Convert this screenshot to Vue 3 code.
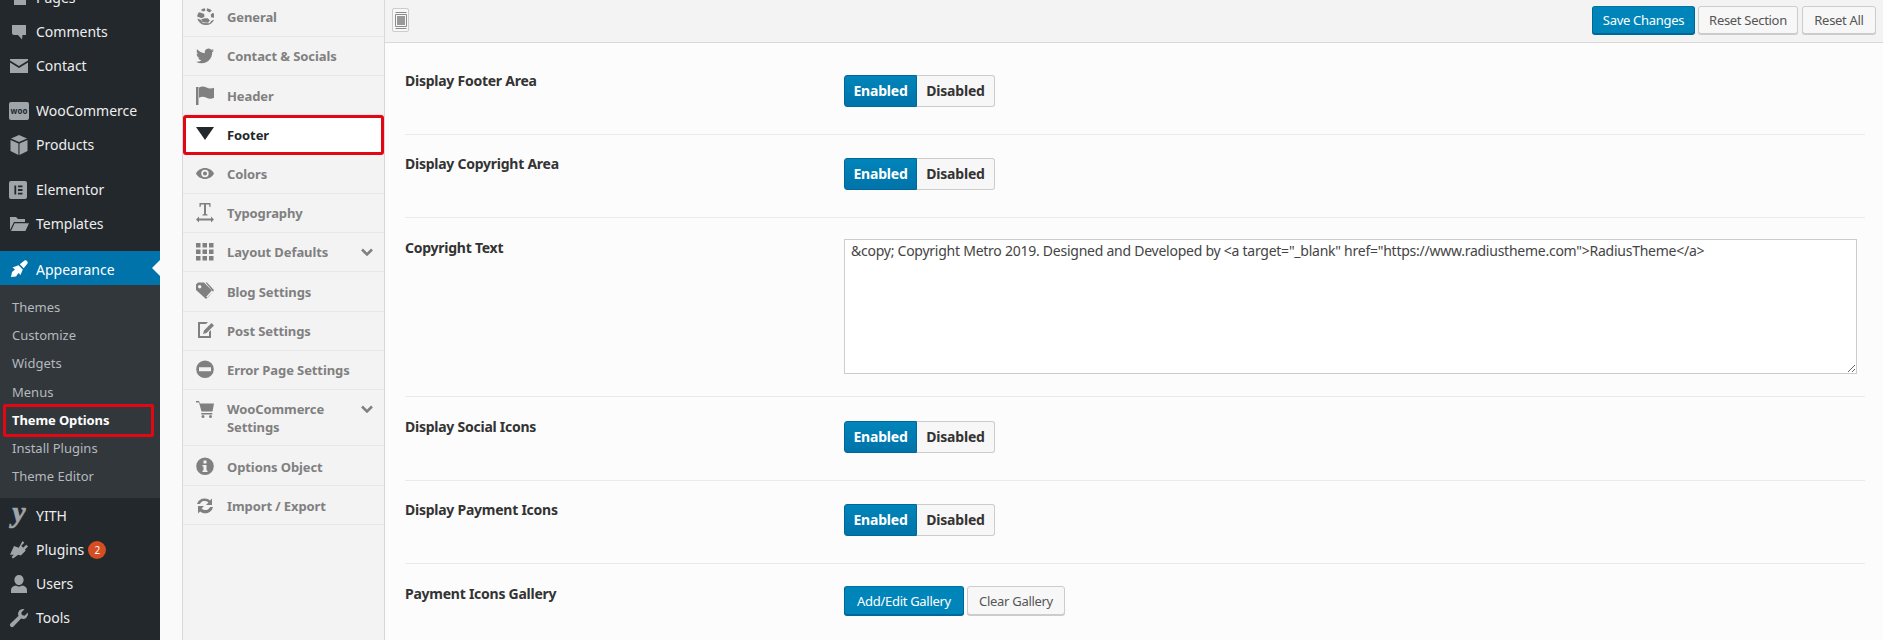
<script setup>
const menuA = [
  { label: 'Pages', icon: 'pages' },
  { label: 'Comments', icon: 'comments' },
  { label: 'Contact', icon: 'mail', sep: true },
  { label: 'WooCommerce', icon: 'woo' },
  { label: 'Products', icon: 'box', sep: true },
  { label: 'Elementor', icon: 'elementor' },
  { label: 'Templates', icon: 'folder', sep: true },
]
const submenu = ['Themes', 'Customize', 'Widgets', 'Menus', 'Theme Options', 'Install Plugins', 'Theme Editor']
const menuB = [
  { label: 'YITH', icon: 'yith' },
  { label: 'Plugins', icon: 'plug', badge: '2' },
  { label: 'Users', icon: 'user' },
  { label: 'Tools', icon: 'wrench' },
]
const icons = {
  pages: 'M3 1h12l2 2v14H5V5H3z',
  comments: 'M3 3h14v10h-3.500l-.5 4.500L9 13H5a2 2 0 0 1-2-2z',
  mail: 'M1 3h18v1.5L10 10 1 4.5zM1 6.5l9 5.5 9-5.5V17H1z',
  box: 'M10 0l8 3.5-8 3.6-8-3.6zM1.5 5L9.4 8.6V20L1.5 16zM18.5 5v11l-8 4V8.6z',
  folder: 'M1 3h6l2 2h7v3H5L1 16zM5.6 9.3H20L16.4 17H2z',
  plug: 'M13.5 1l1.8 1.8-3 3 1.9 1.9 3-3L19 6.5l-3 3 .6 1.2-4.8 4.8-2.6-.8L4 18.5l-1.4-1.4 2.3-2.4H1l4-8.6 4.8 1.6z',
  user: 'M10 1a4.6 4.6 0 0 1 4.6 5c0 2.2-1.6 5-4.6 5S5.4 8.200 5.400 6A4.600 4.600 0 0 1 10 1zM7 11.500c1.800 1.300 4.200 1.300 6 0 3 .4 5 2 5 4.500v3H2v-3c0-2.500 2-4.100 5-4.500z',
  wrench: 'M18.800 4.500a5 5 0 0 1-6.700 6.100L4.500 18.500a1.900 1.900 0 0 1-3-2.900l7.900-7.700A5 5 0 0 1 15.500 1.200L12.300 4.400l.6 2.700 2.700.6z',
}
const nav = [
  { label: 'General', icon: 'globe' },
  { label: 'Contact & Socials', icon: 'twitter' },
  { label: 'Header', icon: 'flag' },
  { label: 'Footer', icon: 'down', active: true },
  { label: 'Colors', icon: 'eye' },
  { label: 'Typography', icon: 'type' },
  { label: 'Layout Defaults', icon: 'grid', caret: true },
  { label: 'Blog Settings', icon: 'tags' },
  { label: 'Post Settings', icon: 'edit' },
  { label: 'Error Page Settings', icon: 'minus' },
  { label: 'WooCommerce Settings', icon: 'cart', caret: true, tall: true },
  { label: 'Options Object', icon: 'info' },
  { label: 'Import / Export', icon: 'refresh' },
]
const navIcons = {
  globe: 'M9 1.200c-1.500.200-3 .800-4.200 1.800L7 4.400 9.300 3.800zM11 1.200l-.4 2.600 3 1.600 2.200-1.800A9 9 0 0 0 11 1.200zM5.200 5.800L2.800 5.300A9 9 0 0 0 1.100 9.500l4.400 1.700 3-1.500-.3-2.600zM17.200 5.700l-2.400 1.500.2 3 3.900.7a9 9 0 0 0-1.700-5.200zM8.400 11.200l-3.300 1.300 1.600 2.700 5.400.6 1.700-2.300-1.900-2.300zM1.300 11.500a9 9 0 0 0 16.800 1.300l-2.700.9-1.800 2.600-6.800-.4-2.100-3.200z',
  flag: 'M0 1h2.500v18H0zM3 1.500c2.500-1.300 5-1.300 7.500 0s5 1.300 7.500.2v10c-2.500 1.300-5 1.300-7.500 0s-5-1.300-7.500 0z',
  down: 'M0 2h18L9 15z',
  eye: 'M9 4c4 0 7.300 2.300 9 5.500-1.700 3.200-5 5.500-9 5.500s-7.300-2.300-9-5.500C1.700 6.300 5 4 9 4zM9 5.800a3.700 3.700 0 1 0 0 7.400 3.700 3.700 0 0 0 0-7.400zM9 7.500a2 2 0 1 1 0 4 2 2 0 0 1 0-4z',
  type: 'M3.500 0h11v4h-1l-.5-2.500H10V11l1.500.5v1h-5v-1L8 11V1.500H5L4.500 4h-1zM3 13.500v2h12v-2l3 3-3 3v-2H3v2l-3-3z',
  grid: 'M0 1h4.500v4.500H0zM6.500 1H11v4.500H6.500zM13 1h4.500v4.500H13zM0 7.500h4.500V12H0zM6.500 7.500H11V12H6.500zM13 7.500h4.500V12H13zM0 14h4.500v4.500H0zM6.500 14H11v4.500H6.500zM13 14h4.500v4.500H13z',
  tags: 'M0 2.500L2 .5h6l9 9-7 7.500-10-9zM3.700 3a1.700 1.700 0 1 0 0 3.400 1.700 1.700 0 0 0 0-3.400zM11 .5l6.500 7c.5.500.5 1 0 1.500l-6 7-1.200-1.200 5.700-6.500-6.500-7.800z',
  edit: 'M2 1h10l-2 2H4v12h9v-4l2-2v8H2zM15.500 2l2.500 2.500-7.500 7.500-3.500 1 1-3.500z',
  minus: 'M9 .5a8.800 8.800 0 1 1 0 17.600A8.800 8.800 0 0 1 9 .5zM3 7.300v4h12v-4z',
  cart: 'M0 1h3l1 2.500h14l-1.500 8H5.500L3 2.500H0zM5.300 13h11v1.500H5.300zM7 15a1.500 1.500 0 1 1 0 3 1.500 1.500 0 0 1 0-3zM14.500 15a1.500 1.500 0 1 1 0 3 1.500 1.500 0 0 1 0-3z',
  info: 'M9 .5a8.800 8.800 0 1 1 0 17.600A8.800 8.800 0 0 1 9 .5zM7.500 3.500v3h3v-3zM6.500 8v1.500h1v4h-1V15h5v-1.500h-1V8z',
  refresh: 'M9 2.500c2 0 3.800.800 5.100 2.100L16 2.500V9h-6l2.400-2.400A5 5 0 0 0 4 8H1a8 8 0 0 1 8-5.500zM2 10h6l-2.400 2.400A5 5 0 0 0 14 11h3a8 8 0 0 1-13 4.400L2 17.500z',
}
const rows = [
  { label: 'Display Footer Area', type: 'switch' },
  { label: 'Display Copyright Area', type: 'switch' },
  { label: 'Copyright Text', type: 'textfield' },
  { label: 'Display Social Icons', type: 'switch' },
  { label: 'Display Payment Icons', type: 'switch' },
  { label: 'Payment Icons Gallery', type: 'gallery' },
]
const copyText = '&copy; Copyright Metro 2019. Designed and Developed by <a target="_blank" href="https://www.radiustheme.com">RadiusTheme</a>'
</script>

<template>
  <div class="page">
    <aside class="side">
      <ul class="menu scrolled">
        <li v-for="m in menuA" :key="m.label" class="item" :class="{ sep: m.sep }">
          <span v-if="m.icon === 'woo'" class="badge-icon woo">woo</span>
          <span v-else-if="m.icon === 'elementor'" class="badge-icon el">
            <svg viewBox="0 0 20 20" width="18" height="18"><path fill="#23282d" d="M6 5h2v10H6zM10 5h5v2h-5zM10 9h5v2h-5zM10 13h5v2h-5z" /></svg>
          </span>
          <svg v-else class="mi" viewBox="0 0 20 20" width="20" height="20"><path :d="icons[m.icon]" /></svg>
          <span>{{ m.label }}</span>
        </li>
        <li class="item current">
          <svg class="mi" viewBox="0 0 20 20" width="20" height="20"><path d="M10.800 5.300L15.500 1.500C17 .5 19.500 3 18.500 4.500L14.700 9.200zM9.500 6.300L13.800 10.600 11.500 16 9.500 14 7 17.500 2 18 3 13 6 10.500 3.500 8.500z" /></svg>
          <span>Appearance</span>
        </li>
        <li class="subwrap">
          <ul class="sub">
            <li v-for="s in submenu" :key="s" :class="{ on: s === 'Theme Options' }">{{ s }}</li>
          </ul>
        </li>
        <li v-for="m in menuB" :key="m.label" class="item">
          <span v-if="m.icon === 'yith'" class="yith">y</span>
          <svg v-else class="mi" viewBox="0 0 20 20" width="20" height="20"><path :d="icons[m.icon]" /></svg>
          <span>{{ m.label }}</span>
          <b v-if="m.badge" class="count">{{ m.badge }}</b>
        </li>
      </ul>
    </aside>

    <div class="gap"></div>

    <nav class="nav">
      <div v-for="n in nav" :key="n.label" class="nav-item" :class="{ active: n.active, tall: n.tall }">
        <svg v-if="n.icon === 'twitter'" class="ni" viewBox="0 0 24 24" width="18" height="18"><path d="M23.953 4.570a10 10 0 01-2.825.775 4.958 4.958 0 002.163-2.723c-.951.555-2.005.959-3.127 1.184a4.920 4.920 0 00-8.384 4.482C7.690 8.095 4.067 6.130 1.640 3.162a4.822 4.822 0 00-.666 2.475c0 1.710.870 3.213 2.188 4.096a4.904 4.904 0 01-2.228-.616v.060a4.923 4.923 0 003.946 4.827 4.996 4.996 0 01-2.212.085 4.936 4.936 0 004.604 3.417 9.867 9.867 0 01-6.102 2.105c-.390 0-.779-.023-1.170-.067a13.995 13.995 0 007.557 2.209c9.053 0 13.998-7.496 13.998-13.985 0-.210 0-.420-.015-.630A9.935 9.935 0 0024 4.590z" /></svg>
        <svg v-else class="ni" viewBox="0 0 18 20" width="18" height="20"><path fill-rule="evenodd" :d="navIcons[n.icon]" /></svg>
        <span class="nl">{{ n.label }}</span>
        <svg v-if="n.caret" class="caret" viewBox="0 0 12 8" width="12" height="8"><path d="M1 1.500L6 6.500 11 1.500" /></svg>
      </div>
    </nav>

    <main class="main">
      <header class="bar">
        <button class="layout-btn" type="button" aria-label="Toggle layout">
          <svg viewBox="0 0 12 17" width="12" height="17"><path fill="none" stroke="#8c8c8c" d="M.5.5h11M.5 16.500h11M.5 2.500h11v12H.5z" /><path fill="#999" d="M2 4h8v9H2z" /></svg>
        </button>
        <div class="bar-actions">
          <button class="btn primary save" type="button">Save Changes</button>
          <button class="btn resets" type="button">Reset Section</button>
          <button class="btn resetall" type="button">Reset All</button>
        </div>
      </header>

      <section class="rows">
        <div v-for="r in rows" :key="r.label" class="row" :class="'type-' + r.type">
          <div class="label">{{ r.label }}</div>
          <div class="control">
            <div v-if="r.type === 'switch'" class="toggle">
              <span class="t-on">Enabled</span>
              <span class="t-off">Disabled</span>
            </div>
            <div v-else-if="r.type === 'textfield'" class="area">{{ copyText }}</div>
            <div v-else class="gal">
              <button class="btn primary small addb" type="button">Add/Edit Gallery</button>
              <button class="btn small clearb" type="button">Clear Gallery</button>
            </div>
          </div>
        </div>
      </section>
    </main>
  </div>
</template>

<style>
html, body { margin: 0; background: #fcfcfc; }
</style>

<style scoped>
* { box-sizing: border-box; }
ul { list-style: none; margin: 0; padding: 0; }
.page {
  display: flex;
  width: 1883px;
  height: 640px;
  overflow: hidden;
  font-family: "Noto Sans", "Open Sans", sans-serif;
  font-size: 14px;
}
.side { width: 160px; flex: none; background: #23282d; overflow: hidden; }
.scrolled { margin-top: -20px; }
.item {
  display: flex;
  align-items: center;
  gap: 7px;
  height: 34px;
  padding-left: 8px;
  padding-top: 1px;
  color: #eee;
  font-size: 14px;
  position: relative;
}
.item.sep { margin-bottom: 11px; }
.mi { flex: none; fill: #a0a5aa; margin-left: 1px; }
.current { background: #0073aa; color: #fff; margin-top: 1px; padding-top: 2px; }
.current .mi { fill: #fff; }
.current::after {
  content: "";
  position: absolute;
  right: 0;
  top: 9px;
  border: 8px solid transparent;
  border-right-color: #fafafa;
  border-left-width: 0;
}
.badge-icon {
  flex: none;
  width: 20px;
  height: 18px;
  margin-left: 1px;
  background: #a0a5aa;
  border-radius: 2px;
  color: #23282d;
  font-size: 8px;
  font-weight: 700;
  line-height: 17px;
  text-align: center;
}
.badge-icon.el { width: 18px; margin: 0 2px 0 1px; display: block; }
.badge-icon.el svg { display: block; }
.yith {
  flex: none;
  width: 20px;
  margin-left: 1px;
  color: #a0a5aa;
  font: italic 700 30px/26px "Liberation Serif", serif;
  -webkit-text-stroke: .7px #a0a5aa;
  text-align: center;
  margin-top: -8px;
}
.subwrap { background: #32373c; padding: 8px 0; }
.sub li {
  height: 28.2px;
  line-height: 28px;
  padding-left: 12px;
  color: #b4b9be;
  font-size: 13px;
  position: relative;
}
.sub li.on { color: #fff; font-weight: 700; letter-spacing: -.1px; }
.sub li.on::after {
  content: "";
  position: absolute;
  left: 3px;
  right: 6px;
  top: -2px;
  bottom: -3px;
  border: 3px solid #e30613;
  border-radius: 2px;
}
.count {
  width: 18px;
  height: 18px;
  margin-left: -3px;
  border-radius: 50%;
  background: #d54e21;
  color: #fff;
  font-size: 10px;
  font-weight: 400;
  line-height: 18px;
  text-align: center;
}
.gap { width: 22px; flex: none; background: #fafafa; }
.nav {
  width: 203px;
  flex: none;
  background: #f3f3f3;
  border-left: 1px solid #d8d8d8;
  border-right: 1px solid #d8d8d8;
}
.nav-item {
  display: flex;
  align-items: center;
  height: 39.3px;
  padding-left: 13px;
  border-bottom: 1px solid #e8e8e8;
  color: #808080;
  font-size: 13px;
  font-weight: 700;
  position: relative;
}
.nav-item:first-child { height: 36.7px; padding-bottom: 2px; }
.nav-item:nth-child(3) { padding-top: 2px; }
.nav-item.tall { height: 56px; align-items: flex-start; padding-top: 10px; line-height: 18px; }
.nav-item.tall ~ .nav-item { padding-top: 2px; }
.ni { flex: none; fill: #808080; margin-right: 13px; }
.nl { white-space: nowrap; letter-spacing: -.1px; }
.tall .nl { width: 110px; white-space: normal; }
.nav-item.active {
  background: #fff;
  color: #23282d;
  border: 3px solid #e30613;
  border-radius: 3px;
  padding-left: 10px;
}
.active .ni { fill: #23282d; }
.caret {
  position: absolute;
  right: 11px;
  top: 15px;
  fill: none;
  stroke: #808080;
  stroke-width: 2.500;
}
.main { flex: 1; min-width: 0; background: #fcfcfc; }
.bar {
  display: flex;
  align-items: center;
  justify-content: space-between;
  height: 43px;
  padding: 0 7px 2px 7px;
  background: #f3f3f3;
  border-bottom: 1px solid #d8d8d8;
}
.layout-btn {
  width: 17px;
  height: 24px;
  padding: 0;
  display: flex;
  align-items: center;
  justify-content: center;
  background: #f7f7f7;
  border: 1px solid #ccc;
  border-radius: 2px;
}
.bar-actions { display: flex; gap: 3px; }
.btn {
  height: 28px;
  padding: 0;
  background: #f7f7f7;
  border: 1px solid #ccc;
  border-radius: 3px;
  box-shadow: 0 1px 0 #ccc;
  color: #555;
  font-family: inherit;
  font-size: 13px;
  letter-spacing: -.3px;
  line-height: 26px;
  white-space: nowrap;
}
.save { width: 103px; }
.resets { width: 100px; }
.resetall { width: 74px; margin-left: 1px; }
.btn.primary {
  background: #0085ba;
  border-color: #0073aa #006799 #006799;
  box-shadow: 0 1px 0 #006799;
  color: #fff;
}
.row {
  display: flex;
  margin-left: 20px;
  margin-right: 18px;
  border-bottom: 1px solid #eaeaea;
}
.row:last-child { border-bottom: 0; }
.row:nth-child(1) { padding: 32px 0 27px; }
.row:nth-child(2) { padding: 23px 0 27px; }
.row:nth-child(3) { padding: 21px 0 22px; }
.row:nth-child(4) { padding: 24px 0 27px; }
.row:nth-child(5) { padding: 23px 0 27px; }
.row:nth-child(6) { padding: 22px 0 0; }
.label {
  width: 439px;
  flex: none;
  margin-top: -4px;
  color: #333;
  font-size: 14px;
  font-weight: 700;
  letter-spacing: -.25px;
  line-height: 20px;
}
.type-textfield .label { margin-top: -1px; }
.type-gallery .label { margin-top: -2px; }
.control { flex: 1; min-width: 0; }
.toggle {
  display: inline-flex;
  height: 32px;
  font-size: 14px;
  font-weight: 700;
  letter-spacing: -.2px;
  line-height: 30px;
  text-align: center;
}
.t-on {
  width: 73px;
  background: linear-gradient(#0085ba, #0073aa);
  border: 1px solid #006799;
  border-radius: 3px 0 0 3px;
  color: #fff;
}
.t-off {
  width: 78px;
  background: #f7f7f7;
  border: 1px solid #ccc;
  border-left: 0;
  border-radius: 0 3px 3px 0;
  color: #333;
}
.area {
  width: 1013px;
  height: 135px;
  padding: 1px 6px;
  background: #fff;
  border: 1px solid #ccc;
  color: #444;
  font-size: 14px;
  letter-spacing: -.25px;
  line-height: 20px;
  resize: vertical;
  overflow: hidden;
  white-space: nowrap;
}
.gal { display: flex; gap: 3px; }
.small { height: 29px; font-size: 13px; }
.addb { width: 120px; }
.clearb { width: 98px; }
</style>
